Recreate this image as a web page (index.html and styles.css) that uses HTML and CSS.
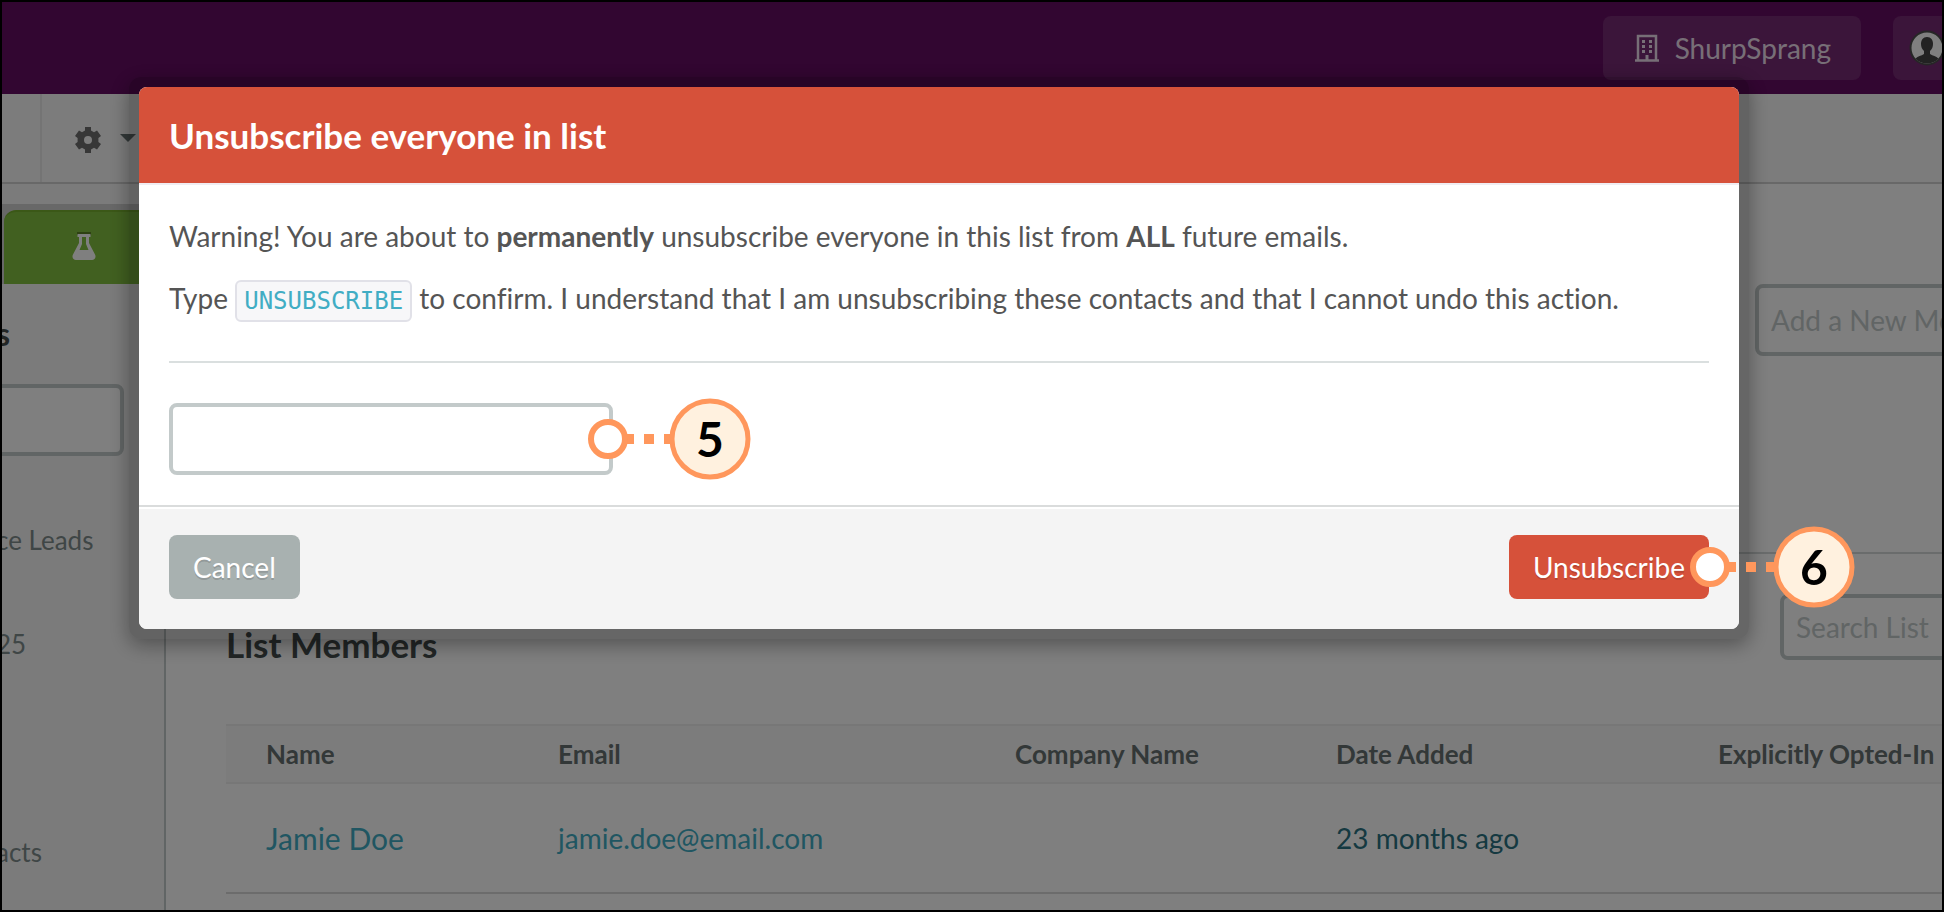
FILE: index.html
```html
<!DOCTYPE html>
<html lang="en">
	<head>
		<meta charset="UTF-8" />
		<meta name="viewport" content="width=device-width, initial-scale=1.0" />
		<title>List Members</title>
		<link rel="stylesheet" href="styles.css">
	</head>
	<body>
		<div class="page">
			<header class="topbar">
				<button class="nav-button" type="button">
					<svg width="24" height="28" viewBox="0 0 24 28">
						<path d="M3 26V2h18v24M0 26.500h24" fill="none" stroke="currentColor" stroke-width="2.500" />
						<path d="M7 6h3v3H7zM14 6h3v3h-3zM7 11h3v3H7zM14 11h3v3h-3zM7 16h3v3H7zM14 16h3v3h-3zM10.500 21h3v5h-3z" fill="currentColor" />
					</svg>
					ShurpSprang
				</button>
				<button class="nav-button nav-profile" type="button" aria-label="Profile">
					<svg width="36" height="36" viewBox="0 0 36 36">
						<circle cx="18" cy="18" r="16.500" fill="#fff" stroke="#4c4c4c" stroke-width="2" />
						<path d="M18 7c-4 0-6 3-6 7 0 3 1 5 3 7v3c-3 2-6 2-8.500 4.500a15.500 15.500 0 0 0 23 0C27 26 24 26 21 24v-3c2-2 3-4 3-7 0-4-2-7-6-7z" fill="#444" />
					</svg>
				</button>
			</header>

			<div class="toolbar">
				<button class="settings" type="button" aria-label="Settings">
					<svg width="26" height="26" viewBox="0 0 26 26">
						<path fill="#6e6e6e" fill-rule="evenodd" d="M10 0h6v3.500l3 1.700 3-1.700 4 5.500-2.600 2v4l2.600 2-4 5.500-3-1.700-3 1.700V26h-6v-3.500l-3-1.700-3 1.700L0 17l2.600-2v-4L0 9l4-5.500 3 1.700 3-1.700zM13 9a4 4 0 1 0 0 8 4 4 0 0 0 0-8z" />
					</svg>
					<svg width="16" height="12" viewBox="0 0 16 12"><path d="M0 0h16L8 8z" fill="#667272" /></svg>
				</button>
			</div>

			<div class="columns">
				<aside class="sidebar">
					<div class="tabs">
						<button class="tab" type="button" aria-label="Tests">
							<svg width="24" height="28" viewBox="0 0 24 28">
								<path d="M5 0h14v3H5z" fill="#5c8226" />
								<path fill="#fff" fill-rule="evenodd" d="M5.500 2h13v3H17v6l6 11.500c1.500 3-.500 5.500-3 5.500H4c-2.500 0-4.500-2.500-3-5.500L7 11V5H5.500zM10 5v7l-2.500 6h9L14 12V5z" />
							</svg>
						</button>
					</div>
					<h2 class="sidebar-title">s</h2>
					<input class="field sidebar-search" type="text" aria-label="Filter lists" />
					<ul class="lists">
						<li>ce Leads</li>
						<li>25</li>
						<li></li>
						<li>acts</li>
					</ul>
				</aside>

				<main class="main">
					<div class="add-member">
						<input class="field" type="text" placeholder="Add a New Member" aria-label="Add a new member" />
					</div>
					<div class="members-head">
						<h2>List Members</h2>
						<input class="field search" type="text" placeholder="Search List" aria-label="Search list" />
					</div>
					<table class="members">
						<thead>
							<tr>
								<th class="col-name">Name</th>
								<th class="col-email">Email</th>
								<th class="col-company">Company Name</th>
								<th class="col-date">Date Added</th>
								<th>Explicitly Opted-In</th>
							</tr>
						</thead>
						<tbody>
							<tr>
								<td class="name"><a href="#">Jamie Doe</a></td>
								<td><a href="#">jamie.doe@email.com</a></td>
								<td></td>
								<td class="date">23 months ago</td>
								<td></td>
							</tr>
						</tbody>
					</table>
				</main>
			</div>
		</div>

		<div class="overlay">
			<div class="modal-frame">
				<form class="modal" role="dialog" aria-labelledby="modal-title">
					<h1 class="modal-header" id="modal-title">Unsubscribe everyone in list</h1>
					<div class="modal-body">
						<p>Warning! You are about to <strong>permanently</strong> unsubscribe everyone in this list from <strong>ALL</strong> future emails.</p>
						<label for="confirm">Type <code>UNSUBSCRIBE</code> to confirm. I understand that I am unsubscribing these contacts and that I cannot undo this action.</label>
						<hr />
						<div class="confirm">
							<input class="field" type="text" id="confirm" />
							<svg class="marker" width="144" height="84" viewBox="0 0 144 84">
								<path d="M38 42h8M56 42h10M76 42h10" stroke="#ff975c" stroke-width="10" />
								<circle cx="20" cy="42" r="17" fill="#fff" stroke="#ff975c" stroke-width="6" />
								<circle cx="122" cy="42" r="38" fill="#fff1df" stroke="#ff975c" stroke-width="5" />
								<text x="122" y="60" text-anchor="middle">5</text>
							</svg>
						</div>
					</div>
					<div class="modal-footer">
						<button class="button cancel" type="button">Cancel</button>
						<div class="action">
							<button class="button danger" type="submit">Unsubscribe</button>
							<svg class="marker" width="146" height="84" viewBox="0 0 146 84">
								<path d="M38 42h8M56 42h10M76 42h10" stroke="#ff975c" stroke-width="10" />
								<circle cx="20" cy="42" r="17" fill="#fff" stroke="#ff975c" stroke-width="6" />
								<circle cx="124" cy="42" r="38" fill="#fff1df" stroke="#ff975c" stroke-width="5" />
								<text x="124" y="60" text-anchor="middle">6</text>
							</svg>
						</div>
					</div>
				</form>
			</div>
		</div>
	</body>
</html>
```
FILE: styles.css
```css
* {
	box-sizing: border-box;
}
body {
	margin: 0;
	height: 100vh;
	border: 2px solid #000;
	overflow: hidden;
	font-family: Lato, sans-serif;
	font-size: 28px;
	color: #555;
	background-color: #fff;
}
h1, h2, p {
	margin: 0;
}
button, input {
	font: inherit;
	color: inherit;
}
button {
	border: none;
	cursor: pointer;
}
.page {
	display: flex;
	flex-direction: column;
	height: 100%;
	overflow: hidden;
}

/* top navigation */
.topbar {
	display: flex;
	flex: none;
	justify-content: flex-end;
	align-items: center;
	gap: 32px;
	height: 92px;
	background-color: #640c62;
}
.nav-button {
	display: flex;
	flex: none;
	align-items: center;
	gap: 16px;
	height: 64px;
	padding: 0 30px 0 32px;
	border-radius: 8px;
	background-color: #762a74;
	color: #efdfee;
}
.nav-profile {
	width: 120px;
	margin-right: -71px;
	padding: 0 16px;
}
.toolbar {
	display: flex;
	flex: none;
	height: 90px;
	padding-left: 38px;
	border-bottom: 2px solid #d0d0d0;
	background-color: #f8f8f8;
}
.settings {
	display: flex;
	align-items: center;
	gap: 19px;
	padding: 4px 33px 0;
	border-left: 2px solid #e8e8e8;
	background: none;
}

/* sidebar */
.columns {
	display: flex;
	flex: 1;
	min-height: 0;
}
.sidebar {
	flex: none;
	width: 164px;
	border-right: 2px solid #c3caca;
	background-color: #f7f7f7;
}
.tabs {
	margin-top: 20px;
	padding: 6px 0 0 2px;
	background-color: #d0d0d0;
}
.tab {
	display: flex;
	align-items: center;
	justify-content: center;
	width: 100%;
	height: 74px;
	padding-bottom: 6px;
	border-top: 2px solid #77b02f;
	border-radius: 12px 0 0 0;
	background-color: #83c141;
}
.sidebar-title {
	margin: 30px 0 0 -6px;
	font-size: 32px;
	line-height: 40px;
	color: #444c4c;
}
.field {
	height: 72px;
	padding: 0 12px;
	border: 4px solid #c3caca;
	border-radius: 8px;
	background-color: #fff;
}
.field::placeholder {
	color: #c3caca;
	opacity: 1;
}
.sidebar-search {
	width: 130px;
	margin: 30px 0 0 -8px;
}
.lists {
	margin: 32px 0 0 -6px;
	padding: 0;
	list-style: none;
	font-size: 26px;
	line-height: 104px;
	color: #7f8c8c;
}
.lists li {
	height: 104px;
}

/* members */
.main {
	flex: 1;
	min-width: 0;
	padding-left: 60px;
	overflow: hidden;
}
.add-member {
	display: flex;
	justify-content: flex-end;
	height: 370px;
	padding-top: 100px;
	border-bottom: 2px solid #d4d9d9;
}
.add-member .field {
	width: 400px;
	margin-right: -213px;
}
.members-head {
	display: flex;
	justify-content: space-between;
	align-items: flex-end;
	height: 106px;
}
.members-head h2 {
	font-size: 35px;
	line-height: 32px;
	color: #444c4c;
}
.members-head .search {
	width: 300px;
	height: 66px;
	margin-right: -138px;
}
.members {
	width: 100%;
	margin-top: 64px;
	border-collapse: collapse;
	table-layout: fixed;
}
.members th,
.members td {
	padding: 0 0 0 40px;
	text-align: left;
	white-space: nowrap;
}
.members th {
	height: 58px;
	border-top: 2px solid #efefef;
	border-bottom: 2px solid #efefef;
	background-color: #f9f9f9;
	font-size: 26px;
	color: #667070;
}
.members td {
	height: 110px;
	border-bottom: 2px solid #d8d8d8;
}
.members .name {
	font-size: 30px;
}
.members a {
	color: #41adc4;
	text-decoration: none;
}
.members .date {
	color: #2a7282;
}
.col-name {
	width: 292px;
}
.col-email {
	width: 457px;
}
.col-company {
	width: 321px;
}
.col-date {
	width: 382px;
}

/* modal */
.overlay {
	position: fixed;
	inset: 0;
	padding: 77px 195px 0 129px;
	background-color: rgba(0, 0, 0, 0.5);
}
.modal-frame {
	padding: 10px;
	border-radius: 12px;
	background-color: rgba(0, 0, 0, 0.2);
	box-shadow: 0 6px 20px rgba(0, 0, 0, 0.35);
}
.modal {
	border-radius: 8px;
	background-color: #fff;
}
.modal-header {
	padding: 28px 30px;
	border-radius: 8px 8px 0 0;
	background-color: #d6513a;
	font-size: 35px;
	line-height: 40px;
	color: #fff;
}
.modal-body {
	padding: 31px 30px 30px;
	border-top: 2px solid #f0edf2;
}
.modal-body p {
	margin-bottom: 20px;
	line-height: 40px;
}
.modal-body label {
	display: block;
	line-height: 44px;
	font-variant-ligatures: no-common-ligatures;
}
.modal-body hr {
	margin: 39px 0 40px;
	border: none;
	border-top: 2px solid #dadfdf;
}
code {
	display: inline-block;
	padding: 0 7px;
	border: 2px solid #e1e1e8;
	border-radius: 6px;
	background-color: #f7f7f9;
	font-family: "DejaVu Sans Mono", monospace;
	font-size: 24px;
	line-height: 38px;
	color: #41adc4;
}
.confirm {
	position: relative;
	width: 444px;
	height: 72px;
}
.confirm .field {
	width: 100%;
}
.modal-footer {
	display: flex;
	justify-content: space-between;
	padding: 28px 30px 30px;
	border-top: 2px solid #dadcdc;
	border-radius: 0 0 8px 8px;
	background-color: #f4f4f4;
	box-shadow: inset 0 2px 0 #fff;
}
.button {
	height: 64px;
	padding: 0 24px;
	border-radius: 8px;
	color: #fff;
	text-shadow: 0 2px 0 rgba(0, 0, 0, 0.15);
}
.cancel {
	background-color: #a8b1b0;
}
.danger {
	background-color: #d6513a;
}
.action {
	position: relative;
}
/* numbered callout over the control's right edge */
.marker {
	position: absolute;
	left: calc(100% - 25px);
	top: -6px;
	overflow: visible;
	pointer-events: none;
}
.action .marker {
	left: calc(100% - 19px);
	top: -10px;
}
.marker text {
	font-size: 48px;
	font-weight: 700;
	fill: #000;
}
```
